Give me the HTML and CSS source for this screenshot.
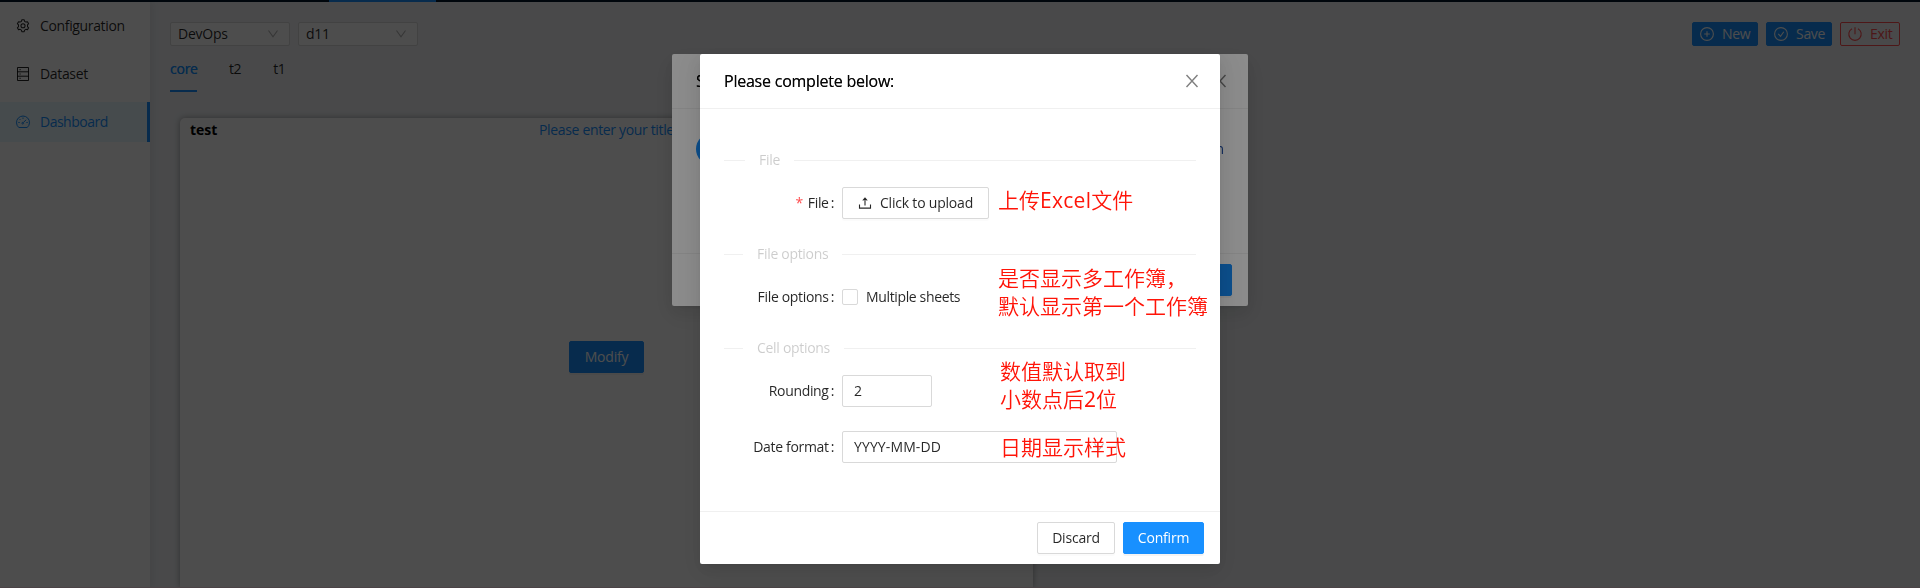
FILE: index.html
```html
<!DOCTYPE html>
<html lang="en">
<head>
<meta charset="utf-8">
<title>Dashboard</title>
<link rel="stylesheet" href="styles.css">
</head>
<body>
<div class="app">
  <header class="topbar"><div class="topbar-active"></div></header>
  <div class="layout">
    <nav class="sidebar">
      <a class="nav-item">
        <svg class="icon" viewBox="0 0 1024 1024"><path d="M512 50l85 10 32 112 95 55 115-30 85 145-83 85v130l83 85-85 145-115-30-95 55-32 112-85 10-85-10-32-112-95-55-115 30-85-145 83-85V427l-83-85 85-145 115 30 95-55 32-112z" fill="none" stroke="currentColor" stroke-width="76" stroke-linejoin="round"/><circle cx="512" cy="492" r="150" fill="none" stroke="currentColor" stroke-width="76"/></svg>
        <span>Configuration</span>
      </a>
      <a class="nav-item">
        <svg class="icon" viewBox="0 0 14 14" fill="none" stroke="currentColor"><path d="M1.500.5h11v13h-11zM1.500 4.800h11M1.500 9.200h11"/><path d="M3.500 2.700h1.200M3.500 7h1.200M3.500 11.300h1.200"/></svg>
        <span>Dataset</span>
      </a>
      <a class="nav-item nav-item-active">
        <svg class="icon" viewBox="0 0 14 14" fill="none" stroke="currentColor"><path d="M2.800 12.500a6.500 6.500 0 1 1 8.400 0z" stroke-linejoin="round"/><path d="M7.300 7.600l2.800-2.800M7 2.500v1.400M3.600 4.100l.9.900M2.300 7.500h1.400M10.400 7.500h1.300"/><circle cx="6.700" cy="8.200" r=".8"/></svg>
        <span class="nav-tight">Dashboard</span>
      </a>
    </nav>
    <main class="content">
      <div class="toolbar">
        <div class="select-small"><span>DevOps</span><svg class="chevron" viewBox="0 0 12 12"><path d="M1.500 2.500L6 8.700l4.500-6.200"/></svg></div>
        <div class="select-small"><span>d11</span><svg class="chevron" viewBox="0 0 12 12"><path d="M1.500 2.500L6 8.700l4.500-6.200"/></svg></div>
        <div class="actions">
          <button class="btn-small btn-blue"><svg class="icon" viewBox="0 0 14 14"><circle cx="7" cy="7" r="6.400"/><path d="M7 4.200v5.600M4.200 7h5.600"/></svg><span>New</span></button>
          <button class="btn-small btn-blue"><svg class="icon" viewBox="0 0 14 14"><circle cx="7" cy="7" r="6.400"/><path d="M4.300 6.800l2.200 2.500 3.300-4.600"/></svg><span>Save</span></button>
          <button class="btn-small btn-danger"><svg class="icon" viewBox="0 0 14 14"><path d="M4 1.700a6.200 6.200 0 1 0 6 0M7 .3v7"/></svg><span>Exit</span></button>
        </div>
      </div>
      <div class="tabs">
        <div class="tab tab-active">core</div>
        <div class="tab">t2</div>
        <div class="tab">t1</div>
      </div>
      <section class="card">
        <div class="card-head"><b>test</b><a class="card-title">Please enter your title</a></div>
        <button class="btn btn-primary modify">Modify</button>
      </section>
    </main>
  </div>
</div>

<div class="mask">
  <div class="modal modal-steps">
    <div class="modal-head"><span>S</span><svg class="close" viewBox="0 0 14 14"><path d="M1.500 1l11 12M12.500 1l-11 12"/></svg></div>
    <div class="steps"><i class="step-dot"></i><span class="step-name">Selection</span></div>
    <div class="modal-foot"><button class="btn btn-primary"></button></div>
  </div>
</div>

<div class="mask">
  <div class="modal modal-form">
    <div class="modal-head"><span>Please complete below:</span><svg class="close" viewBox="0 0 14 14"><path d="M1.500 1l11 12M12.500 1l-11 12"/></svg></div>
    <div class="modal-body">
      <div class="divider divider-file"><span>File</span></div>
      <div class="row"><label class="required">File<em>:</em></label>
        <button class="btn upload"><svg class="icon" viewBox="0 0 14 14"><path d="M1.500 8.500v3.600h11V8.500M7 9.500V2.500M4.800 4.500L7 2l2.200 2.500"/></svg><span>Click to upload</span></button></div>
      <div class="divider"><span>File options</span></div>
      <div class="row"><label>File options<em>:</em></label><i class="checkbox"></i><span class="check-text">Multiple sheets</span></div>
      <div class="divider"><span>Cell options</span></div>
      <div class="row"><label>Rounding<em>:</em></label><div class="input input-num">2</div></div>
      <div class="row"><label>Date format<em>:</em></label><div class="input input-date"><span>YYYY-MM-DD</span><svg class="chevron" viewBox="0 0 12 12"><path d="M1.500 2.500L6 8.700l4.500-6.200"/></svg></div></div>
    </div>
    <div class="modal-foot"><button class="btn discard">Discard</button><button class="btn btn-primary confirm">Confirm</button></div>
    <p class="note note-upload">上传<span>Excel</span>文件</p>
    <p class="note note-sheets">是否显示多工作簿，<br>默认显示第一个工作簿</p>
    <p class="note note-round">数值默认取到<br>小数点后<span>2</span>位</p>
    <p class="note note-date">日期显示样式</p>
  </div>
</div>
</body>
</html>
```
FILE: styles.css
```css
* { box-sizing: border-box; }
body {
  margin: 0;
  height: 588px;
  overflow: hidden;
  font: 14px/22px "Open Sans", "Noto Sans", "Noto Sans CJK SC", sans-serif;
  color: rgba(0, 0, 0, .85);
  background: #f0f2f5;
}
button { font: inherit; margin: 0; }
.icon { width: 14px; height: 14px; flex: none; overflow: visible; }
.app { height: 588px; overflow: hidden; border-bottom: 1px solid #f8dfe6; }
.topbar { height: 2px; background: #001529; padding-left: 329px; }
.topbar-active { width: 107px; height: 2px; background: #1890ff; }
.layout { display: flex; height: 585px; }

.sidebar {
  width: 150px;
  flex: none;
  padding-top: 4px;
  display: flex;
  flex-direction: column;
  gap: 8px;
  background: #fff;
  box-shadow: 2px 0 8px rgba(29, 35, 41, .08);
}
.nav-item { display: flex; align-items: center; gap: 10px; height: 40px; padding-left: 16px; letter-spacing: -.35px; }
.nav-tight { letter-spacing: -.5px; }
.nav-item-active { color: #1890ff; background: #e6f7ff; border-right: 3px solid #1890ff; }

.content { flex: 1; padding: 20px 20px 0; display: flex; flex-direction: column; }
.toolbar { display: flex; gap: 8px; }
.select-small {
  width: 120px; height: 24px; padding: 0 10px 0 7px;
  display: flex; align-items: center; justify-content: space-between;
  background: #fff; border: 1px solid #d9d9d9; border-radius: 2px;
  letter-spacing: -.25px;
}
.chevron { width: 12px; height: 12px; fill: none; stroke: rgba(0, 0, 0, .3); stroke-width: 1.1; }
.actions { display: flex; gap: 8px; margin-left: auto; }
.btn-small {
  height: 24px; width: 66px; padding: 0 7px; display: flex; align-items: center; gap: 8px;
  border: 1px solid; border-radius: 2px; letter-spacing: -.3px;
}
.btn-small .icon { fill: none; stroke: currentColor; stroke-width: 1.1; }
.btn-blue { color: #fff; background: #1890ff; border-color: #1890ff; }
.btn-danger { width: 60px; color: #ff4d4f; border-color: #ff4d4f; background: transparent; }

.tabs { display: flex; gap: 32px; height: 46px; padding-top: 12px; }
.tab { height: 34px; letter-spacing: -.4px; }
.tab-active { width: 27px; letter-spacing: -.25px; color: #1890ff; text-shadow: 0 0 .25px currentColor; border-bottom: 2px solid #1890ff; }

.card {
  width: 853px; flex: 1; margin: 26px 0 0 10px; padding: 0 10px;
  background: #fff; border-radius: 5px 5px 0 0;
  box-shadow: 0 0 6px rgba(0, 0, 0, .35);
}
.card-head { display: flex; color: #000; }
.card-head b { width: 349px; padding-top: 1px; }
.card-title { color: #1890ff; padding-top: 1px; letter-spacing: -.34px; }
.modify { display: block; margin: 200px 0 0 379px; width: 75px; }

.btn {
  height: 32px; padding: 0; border: 1px solid #d9d9d9; border-radius: 2px;
  background: #fff; color: rgba(0, 0, 0, .85); letter-spacing: -.2px;
  box-shadow: 0 2px 0 rgba(0, 0, 0, .016);
}
.btn-primary { color: #fff; background: #1890ff; border-color: #1890ff; box-shadow: 0 2px 0 rgba(0, 0, 0, .045); }

.mask { position: fixed; inset: 0; padding-top: 54px; background: rgba(0, 0, 0, .45); }
.modal {
  position: relative; display: flex; flex-direction: column; margin: 0 auto;
  background: #fff; border-radius: 2px;
  box-shadow: 0 3px 6px -4px rgba(0, 0, 0, .12), 0 6px 16px rgba(0, 0, 0, .08), 0 9px 28px 8px rgba(0, 0, 0, .05);
}
.modal-steps { width: 576px; height: 252px; }
.modal-form { width: 520px; height: 510px; }
.modal-head {
  display: flex; align-items: center; justify-content: space-between;
  height: 55px; padding: 0 21px 0 24px; border-bottom: 1px solid #f0f0f0;
  font-size: 16px; letter-spacing: -.23px; text-shadow: 0 0 .3px currentColor;
}
.close { width: 14px; height: 14px; fill: none; stroke: rgba(0, 0, 0, .5); stroke-width: 1.4; }
.steps { flex: 1; display: flex; align-items: flex-start; justify-content: space-between; padding: 24px; }
.step-dot { width: 32px; height: 32px; border-radius: 50%; background: #1890ff; }
.step-name { padding-top: 5px; color: #1d4fa8; }
.modal-foot {
  display: flex; justify-content: flex-end; gap: 8px; height: 53px; padding: 10px 16px;
  border-top: 1px solid #f0f0f0;
}
.modal-steps .btn { width: 66px; }
.discard { width: 78px; }
.confirm { width: 81px; }

.modal-body { flex: 1; padding: 40px 24px 0; }
.divider { display: flex; align-items: center; gap: 14px; height: 22px; margin-bottom: 16px; color: rgba(0, 0, 0, .2); letter-spacing: -.3px; }
.divider::before, .divider::after { content: ""; height: 1px; background: #f0f0f0; }
.divider::before { width: 19px; }
.divider::after { flex: 1; }
.divider-file::before { width: 21px; }
.row { display: flex; align-items: center; height: 32px; margin-bottom: 24px; }
.row label { width: 118px; padding-right: 8px; text-align: right; letter-spacing: -.33px; }
.row em { font-style: normal; margin-left: 2px; }
.required::before { content: "*"; color: #ff4d4f; margin-right: 5px; }
.upload { width: 147px; display: flex; align-items: center; justify-content: center; gap: 8px; }
.upload .icon { fill: none; stroke: currentColor; stroke-width: 1.1; }
.checkbox { width: 16px; height: 16px; border: 1px solid #d9d9d9; border-radius: 2px; }
.check-text { margin-left: 8px; letter-spacing: -.36px; }
.input {
  height: 32px; padding: 0 11px; display: flex; align-items: center; justify-content: space-between;
  border: 1px solid #d9d9d9; border-radius: 2px;
}
.input-num { width: 90px; }
.input-date { width: 275px; letter-spacing: .12px; }

/* annotations laid over the form */
.note { position: absolute; margin: 0; font: 350 21px/28px "Noto Sans CJK SC", sans-serif; color: #ff1408; white-space: nowrap; }
.note span { font-family: "Open Sans", sans-serif; font-weight: 400; line-height: 1; }
.note-upload { left: 298px; top: 131px; }
.note-upload span { letter-spacing: .3px; }
.note-sheets { left: 298px; top: 209px; }
.note-round { left: 300px; top: 302px; }
.note-date { left: 300px; top: 378px; }
```
